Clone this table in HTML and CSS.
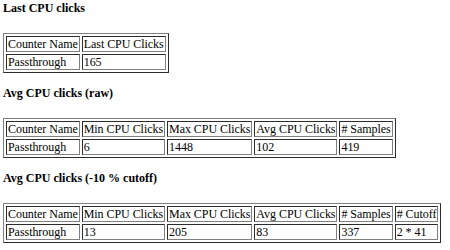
FILE: index.html
```html
<!DOCTYPE html>
<html>
<head>
<meta charset="utf-8">
<link rel="stylesheet" href="styles.css">
</head>
<body class="page">
<h4 class="title">Last CPU clicks</h4>
<table class="stats">
<tr><td>Counter Name</td><td>Last CPU Clicks</td></tr>
<tr><td>Passthrough</td><td>165</td></tr>
</table>
<h4 class="title">Avg CPU clicks (raw)</h4>
<table class="stats">
<tr><td>Counter Name</td><td>Min CPU Clicks</td><td>Max CPU Clicks</td><td>Avg CPU Clicks</td><td># Samples</td></tr>
<tr><td>Passthrough</td><td>6</td><td>1448</td><td>102</td><td>419</td></tr>
</table>
<h4 class="title">Avg CPU clicks (-10 % cutoff)</h4>
<table class="stats">
<tr><td>Counter Name</td><td>Min CPU Clicks</td><td>Max CPU Clicks</td><td>Avg CPU Clicks</td><td># Samples</td><td># Cutoff</td></tr>
<tr><td>Passthrough</td><td>13</td><td>205</td><td>83</td><td>337</td><td>2 * 41</td></tr>
</table>
</body>
</html>
```
FILE: styles.css
```css
.page {
  margin: 1px 3px;
  font-family: "Liberation Serif", "Times New Roman", serif;
  font-size: 12px;
  color: #000;
  background: #fff;
}
.title {
  font-size: 12px;
  line-height: 14px;
  font-weight: bold;
  margin: 0 0 18px 0;
}
.stats {
  border: 1px outset #808080;
  border-spacing: 2px;
  margin-bottom: 13px;
}
.stats td {
  border: 1px inset #808080;
  padding: 1px;
  line-height: 12px;
  white-space: nowrap;
  letter-spacing: -0.05px;
}
```
